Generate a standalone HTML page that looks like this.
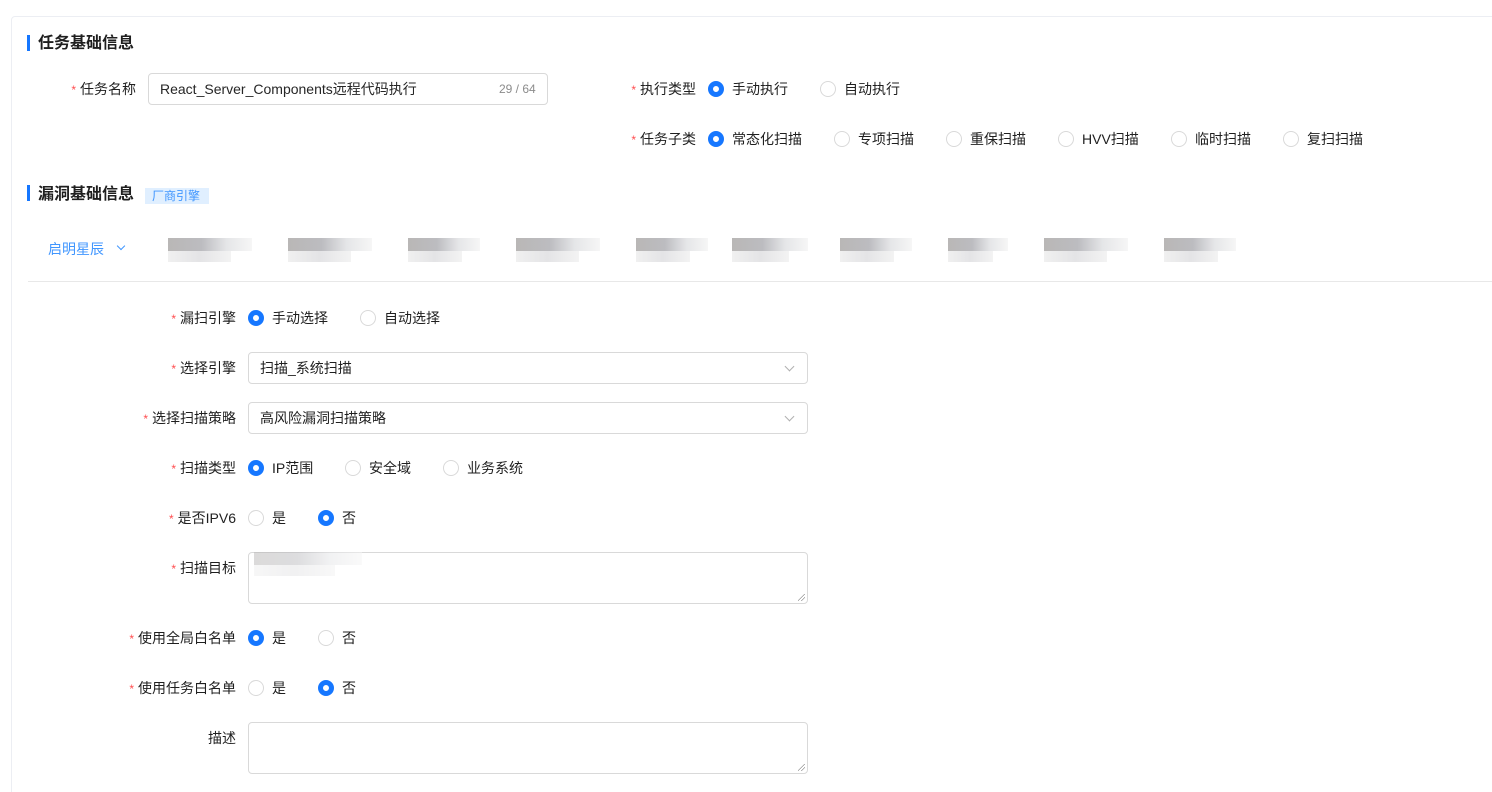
<!DOCTYPE html>
<html style="overflow:hidden;width:1492px;height:792px"><head><meta charset="utf-8"><style>
*{box-sizing:border-box;margin:0;padding:0}
html,body{width:1492px;height:792px;overflow:hidden}
body{background:#fff;font-family:"Liberation Sans","Noto Sans CJK SC",sans-serif;font-size:14px;color:#1f1f1f;position:relative}
.card{position:absolute;left:11px;top:16px;width:1490px;height:790px;border:1px solid #eceef3;border-radius:4px}
.a{position:absolute;white-space:nowrap}
.h{font-size:16px;font-weight:bold;color:#1f1f1f;line-height:20px}
.bar{position:absolute;width:3px;height:16px;background:#1677ff}
.lbl{position:absolute;text-align:right;line-height:20px;color:#1f1f1f}
.lbl i{color:#ff4d4f;font-style:normal;margin-right:4px;font-size:12px}
.r{position:absolute;width:16px;height:16px;border-radius:50%;border:1px solid #d9d9d9;background:#fff}
.r.c{border:5px solid #1677ff}
.t{position:absolute;line-height:20px}
.inp{position:absolute;border:1px solid #d9d9d9;border-radius:4px;background:#fff}
.chev{position:absolute;right:14px;top:10px;width:7px;height:7px;border-right:1px solid #b0b0b0;border-bottom:1px solid #b0b0b0;transform:rotate(45deg)}
.blur{position:absolute;height:26px}
.blur:before{content:"";position:absolute;left:0;top:0;height:13px;width:100%;background:linear-gradient(90deg,#b9b7b6,#bcbcc0 40%,#e5e6e8 70%,#f6f6f6)}
.blur:after{content:"";position:absolute;left:0;top:13px;height:11px;width:75%;background:linear-gradient(90deg,#f0f0f0,#e4e4e6,#f3f3f3)}
.grip{position:absolute;right:2px;bottom:2px;width:7px;height:7px;background:linear-gradient(135deg,transparent 45%,#999 46%,#999 52%,transparent 53%,transparent 70%,#999 71%,#999 77%,transparent 78%)}
</style></head><body>
<div class="card"></div>

<div class="bar" style="left:27px;top:35px"></div>
<div class="a h" style="left:38px;top:34px">任务基础信息</div>

<div class="lbl" style="left:40px;width:96px;top:79px"><i>*</i>任务名称</div>
<div class="inp" style="left:148px;top:73px;width:400px;height:32px"></div>
<div class="a" style="left:160px;top:79px;line-height:20px;color:#262626">React_Server_Components远程代码执行</div>
<div class="a" style="left:499px;top:80px;font-size:12px;color:#8c8c8c;line-height:18px">29 / 64</div>

<div class="lbl" style="left:600px;width:96px;top:79px"><i>*</i>执行类型</div>
<div class="r c" style="left:708px;top:81px"></div><div class="t" style="left:732px;top:79px">手动执行</div>
<div class="r" style="left:820px;top:81px"></div><div class="t" style="left:844px;top:79px">自动执行</div>

<div class="lbl" style="left:600px;width:96px;top:129px"><i>*</i>任务子类</div>
<div class="r c" style="left:708px;top:131px"></div><div class="t" style="left:732px;top:129px">常态化扫描</div>
<div class="r" style="left:834px;top:131px"></div><div class="t" style="left:858px;top:129px">专项扫描</div>
<div class="r" style="left:946px;top:131px"></div><div class="t" style="left:970px;top:129px">重保扫描</div>
<div class="r" style="left:1058px;top:131px"></div><div class="t" style="left:1082px;top:129px">HVV扫描</div>
<div class="r" style="left:1171px;top:131px"></div><div class="t" style="left:1195px;top:129px">临时扫描</div>
<div class="r" style="left:1283px;top:131px"></div><div class="t" style="left:1307px;top:129px">复扫扫描</div>

<div class="bar" style="left:27px;top:185px"></div>
<div class="a h" style="left:38px;top:185px">漏洞基础信息</div>
<div class="a" style="left:145px;top:188px;height:16px;width:64px;background:#e0efff;color:#4096ff;font-size:12px;line-height:16px;padding-left:7px">厂商引擎</div>

<div class="a" style="left:48px;top:239px;color:#4096ff;line-height:20px">启明星辰</div>
<div class="a" style="left:118px;top:243px;width:6px;height:6px;border-right:1px solid #4096ff;border-bottom:1px solid #4096ff;transform:rotate(45deg)"></div>
<div class="blur" style="left:168px;top:238px;width:84px"></div>
<div class="blur" style="left:288px;top:238px;width:84px"></div>
<div class="blur" style="left:408px;top:238px;width:72px"></div>
<div class="blur" style="left:516px;top:238px;width:84px"></div>
<div class="blur" style="left:636px;top:238px;width:72px"></div>
<div class="blur" style="left:732px;top:238px;width:76px"></div>
<div class="blur" style="left:840px;top:238px;width:72px"></div>
<div class="blur" style="left:948px;top:238px;width:60px"></div>
<div class="blur" style="left:1044px;top:238px;width:84px"></div>
<div class="blur" style="left:1164px;top:238px;width:72px"></div>
<div class="a" style="left:28px;top:281px;width:1470px;height:1px;background:#e8e8e8"></div>

<div class="lbl" style="left:100px;width:136px;top:308px"><i>*</i>漏扫引擎</div>
<div class="r c" style="left:248px;top:310px"></div><div class="t" style="left:272px;top:308px">手动选择</div>
<div class="r" style="left:360px;top:310px"></div><div class="t" style="left:384px;top:308px">自动选择</div>

<div class="lbl" style="left:100px;width:136px;top:358px"><i>*</i>选择引擎</div>
<div class="inp" style="left:248px;top:352px;width:560px;height:32px"><div class="chev"></div></div>
<div class="t" style="left:260px;top:358px">扫描_系统扫描</div>

<div class="lbl" style="left:100px;width:136px;top:408px"><i>*</i>选择扫描策略</div>
<div class="inp" style="left:248px;top:402px;width:560px;height:32px"><div class="chev"></div></div>
<div class="t" style="left:260px;top:408px">高风险漏洞扫描策略</div>

<div class="lbl" style="left:100px;width:136px;top:458px"><i>*</i>扫描类型</div>
<div class="r c" style="left:248px;top:460px"></div><div class="t" style="left:272px;top:458px">IP范围</div>
<div class="r" style="left:345px;top:460px"></div><div class="t" style="left:369px;top:458px">安全域</div>
<div class="r" style="left:443px;top:460px"></div><div class="t" style="left:467px;top:458px">业务系统</div>

<div class="lbl" style="left:100px;width:136px;top:508px"><i>*</i>是否IPV6</div>
<div class="r" style="left:248px;top:510px"></div><div class="t" style="left:272px;top:508px">是</div>
<div class="r c" style="left:318px;top:510px"></div><div class="t" style="left:342px;top:508px">否</div>

<div class="lbl" style="left:100px;width:136px;top:558px"><i>*</i>扫描目标</div>
<div class="inp" style="left:248px;top:552px;width:560px;height:52px"><div class="grip"></div></div>
<div class="blur" style="left:254px;top:552px;width:108px;opacity:.5"></div>

<div class="lbl" style="left:100px;width:136px;top:628px"><i>*</i>使用全局白名单</div>
<div class="r c" style="left:248px;top:630px"></div><div class="t" style="left:272px;top:628px">是</div>
<div class="r" style="left:318px;top:630px"></div><div class="t" style="left:342px;top:628px">否</div>

<div class="lbl" style="left:100px;width:136px;top:678px"><i>*</i>使用任务白名单</div>
<div class="r" style="left:248px;top:680px"></div><div class="t" style="left:272px;top:678px">是</div>
<div class="r c" style="left:318px;top:680px"></div><div class="t" style="left:342px;top:678px">否</div>

<div class="lbl" style="left:100px;width:136px;top:728px">描述</div>
<div class="inp" style="left:248px;top:722px;width:560px;height:52px"><div class="grip"></div></div>
</body></html>
